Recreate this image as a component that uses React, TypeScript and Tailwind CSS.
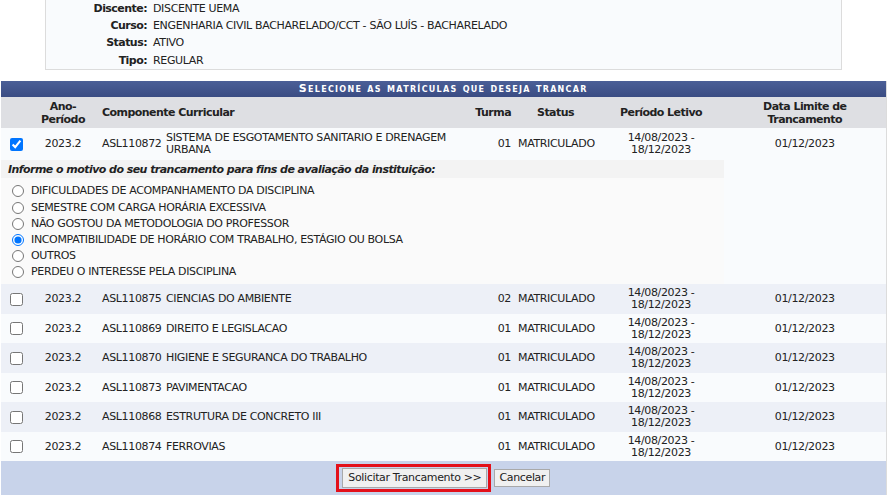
import React from "react";

interface Disciplina {
  codigo: string;
  nome: string;
  turma: string;
  marcada?: boolean;
}

const DISCIPLINAS: Disciplina[] = [
  { codigo: "ASL110872", nome: "SISTEMA DE ESGOTAMENTO SANITARIO E DRENAGEM URBANA", turma: "01", marcada: true },
  { codigo: "ASL110875", nome: "CIENCIAS DO AMBIENTE", turma: "02" },
  { codigo: "ASL110869", nome: "DIREITO E LEGISLACAO", turma: "01" },
  { codigo: "ASL110870", nome: "HIGIENE E SEGURANCA DO TRABALHO", turma: "01" },
  { codigo: "ASL110873", nome: "PAVIMENTACAO", turma: "01" },
  { codigo: "ASL110868", nome: "ESTRUTURA DE CONCRETO III", turma: "01" },
  { codigo: "ASL110874", nome: "FERROVIAS", turma: "01" },
];

const MOTIVOS = [
  "DIFICULDADES DE ACOMPANHAMENTO DA DISCIPLINA",
  "SEMESTRE COM CARGA HORÁRIA EXCESSIVA",
  "NÃO GOSTOU DA METODOLOGIA DO PROFESSOR",
  "INCOMPATIBILIDADE DE HORÁRIO COM TRABALHO, ESTÁGIO OU BOLSA",
  "OUTROS",
  "PERDEU O INTERESSE PELA DISCIPLINA",
];

const INFO = [
  ["Discente:", "DISCENTE UEMA"],
  ["Curso:", "ENGENHARIA CIVIL BACHARELADO/CCT - SÃO LUÍS - BACHARELADO"],
  ["Status:", "ATIVO"],
  ["Tipo:", "REGULAR"],
];

function LinhaDisciplina({ d, par }: { d: Disciplina; par: boolean }) {
  return (
    <tr className={`${par ? "bg-[#edf0f7]" : "bg-[#f9fbfd]"} ${d.marcada ? "h-[32px]" : "h-[29.5px]"}`}>
      <td className="text-center align-middle">
        <input type="checkbox" defaultChecked={d.marcada} className="align-middle" />
      </td>
      <td className="text-center">2023.2</td>
      <td className="pl-[7px]">{d.codigo}</td>
      <td className="pl-[3px] pr-2">{d.nome}</td>
      <td className="text-right pr-[2px]">{d.turma}</td>
      <td className="pl-[5px]">MATRICULADO</td>
      <td className="text-center">
        14/08/2023 -<br />18/12/2023
      </td>
      <td className="text-center">01/12/2023</td>
    </tr>
  );
}

export default function App() {
  const [motivo, setMotivo] = React.useState(3);

  return (
    <div className="w-[892px] h-[498px] overflow-hidden bg-white text-[11px] leading-[12px] tracking-[-0.35px] text-[#222] font-['DejaVu_Sans',Verdana,sans-serif]">
      {/* Dados do discente */}
      <div className="ml-[45px] w-[797px] -mt-[2px] border border-[#dcdcdc] bg-[#f9fbfd] pt-[1px]">
        {INFO.map(([label, valor]) => (
          <div key={label} className="flex h-[17.33px] items-center">
            <span className="w-[101px] text-right font-bold tracking-[-0.55px]">{label}</span>
            <span className="pl-[6px]">{valor}</span>
          </div>
        ))}
      </div>

      {/* Tabela de matrículas */}
      <table className="mt-[11px] ml-px w-[885px] table-fixed border-collapse border-r border-[#dcdcdc]">
        <colgroup>
          <col className="w-[30px]" />
          <col className="w-[64px]" />
          <col className="w-[68px]" />
          <col className="w-[308px]" />
          <col className="w-[42px]" />
          <col className="w-[85px]" />
          <col className="w-[126px]" />
          <col className="w-[162px]" />
        </colgroup>
        <thead>
          <tr>
            <th
              colSpan={8}
              className="h-[16px] bg-gradient-to-b from-[#4b5f97] to-[#3a4c83] text-center text-[11px] font-bold tracking-[1.3px] text-white [font-variant:small-caps]"
            >
              Selecione as matrículas que deseja trancar
            </th>
          </tr>
          <tr className="h-[31px] bg-[#dedfe3] font-bold leading-[13px] tracking-[-0.55px]">
            <th></th>
            <th className="text-center font-bold">
              Ano-
              <br />
              Período
            </th>
            <th colSpan={2} className="pl-[7px] text-left font-bold">
              Componente Curricular
            </th>
            <th className="text-right pr-[2px] font-bold">Turma</th>
            <th className="text-center font-bold">Status</th>
            <th className="text-center font-bold">Período Letivo</th>
            <th className="text-center font-bold">
              Data Limite de
              <br />
              Trancamento
            </th>
          </tr>
        </thead>
        <tbody>
          <LinhaDisciplina d={DISCIPLINAS[0]} par={false} />
          <tr className="bg-[#f9fbfd]">
            <td colSpan={7} className="p-0 align-top bg-[#fafafa]">
              <div className="flex h-[18px] items-center bg-[#f3f3f3] pl-[7px] pt-[2px] font-bold italic tracking-[-0.55px]">
                Informe o motivo do seu trancamento para fins de avaliação da instituição:
              </div>
              <div className="pt-[5px] pb-[4px]">
                {MOTIVOS.map((m, i) => (
                  <label key={m} className="flex h-[16.2px] items-center">
                    <input
                      type="radio"
                      name="motivo"
                      checked={motivo === i}
                      onChange={() => setMotivo(i)}
                      className="ml-[11px] mr-[7px] h-[12px] w-[12px]"
                    />
                    {m}
                  </label>
                ))}
              </div>
            </td>
            <td></td>
          </tr>
          {DISCIPLINAS.slice(1).map((d, i) => (
            <LinhaDisciplina key={d.codigo} d={d} par={i % 2 === 0} />
          ))}
        </tbody>
        <tfoot>
          <tr className="h-[34px] bg-[#c8d3ea]">
            <td colSpan={8} className="text-center">
              <div className="inline-flex items-center gap-[3px]">
                <span className="inline-flex border-[3px] border-[#e3101a] pl-[3px] pr-px py-[1px]">
                  <button className="h-[20px] border border-[#a9a9a9] bg-[#f0f0f0] px-[5px] text-[11px]">
                    Solicitar Trancamento &gt;&gt;
                  </button>
                </span>
                <button className="h-[18px] border border-[#a9a9a9] bg-[#f0f0f0] px-[4px] text-[11px]">
                  Cancelar
                </button>
              </div>
            </td>
          </tr>
        </tfoot>
      </table>
    </div>
  );
}
